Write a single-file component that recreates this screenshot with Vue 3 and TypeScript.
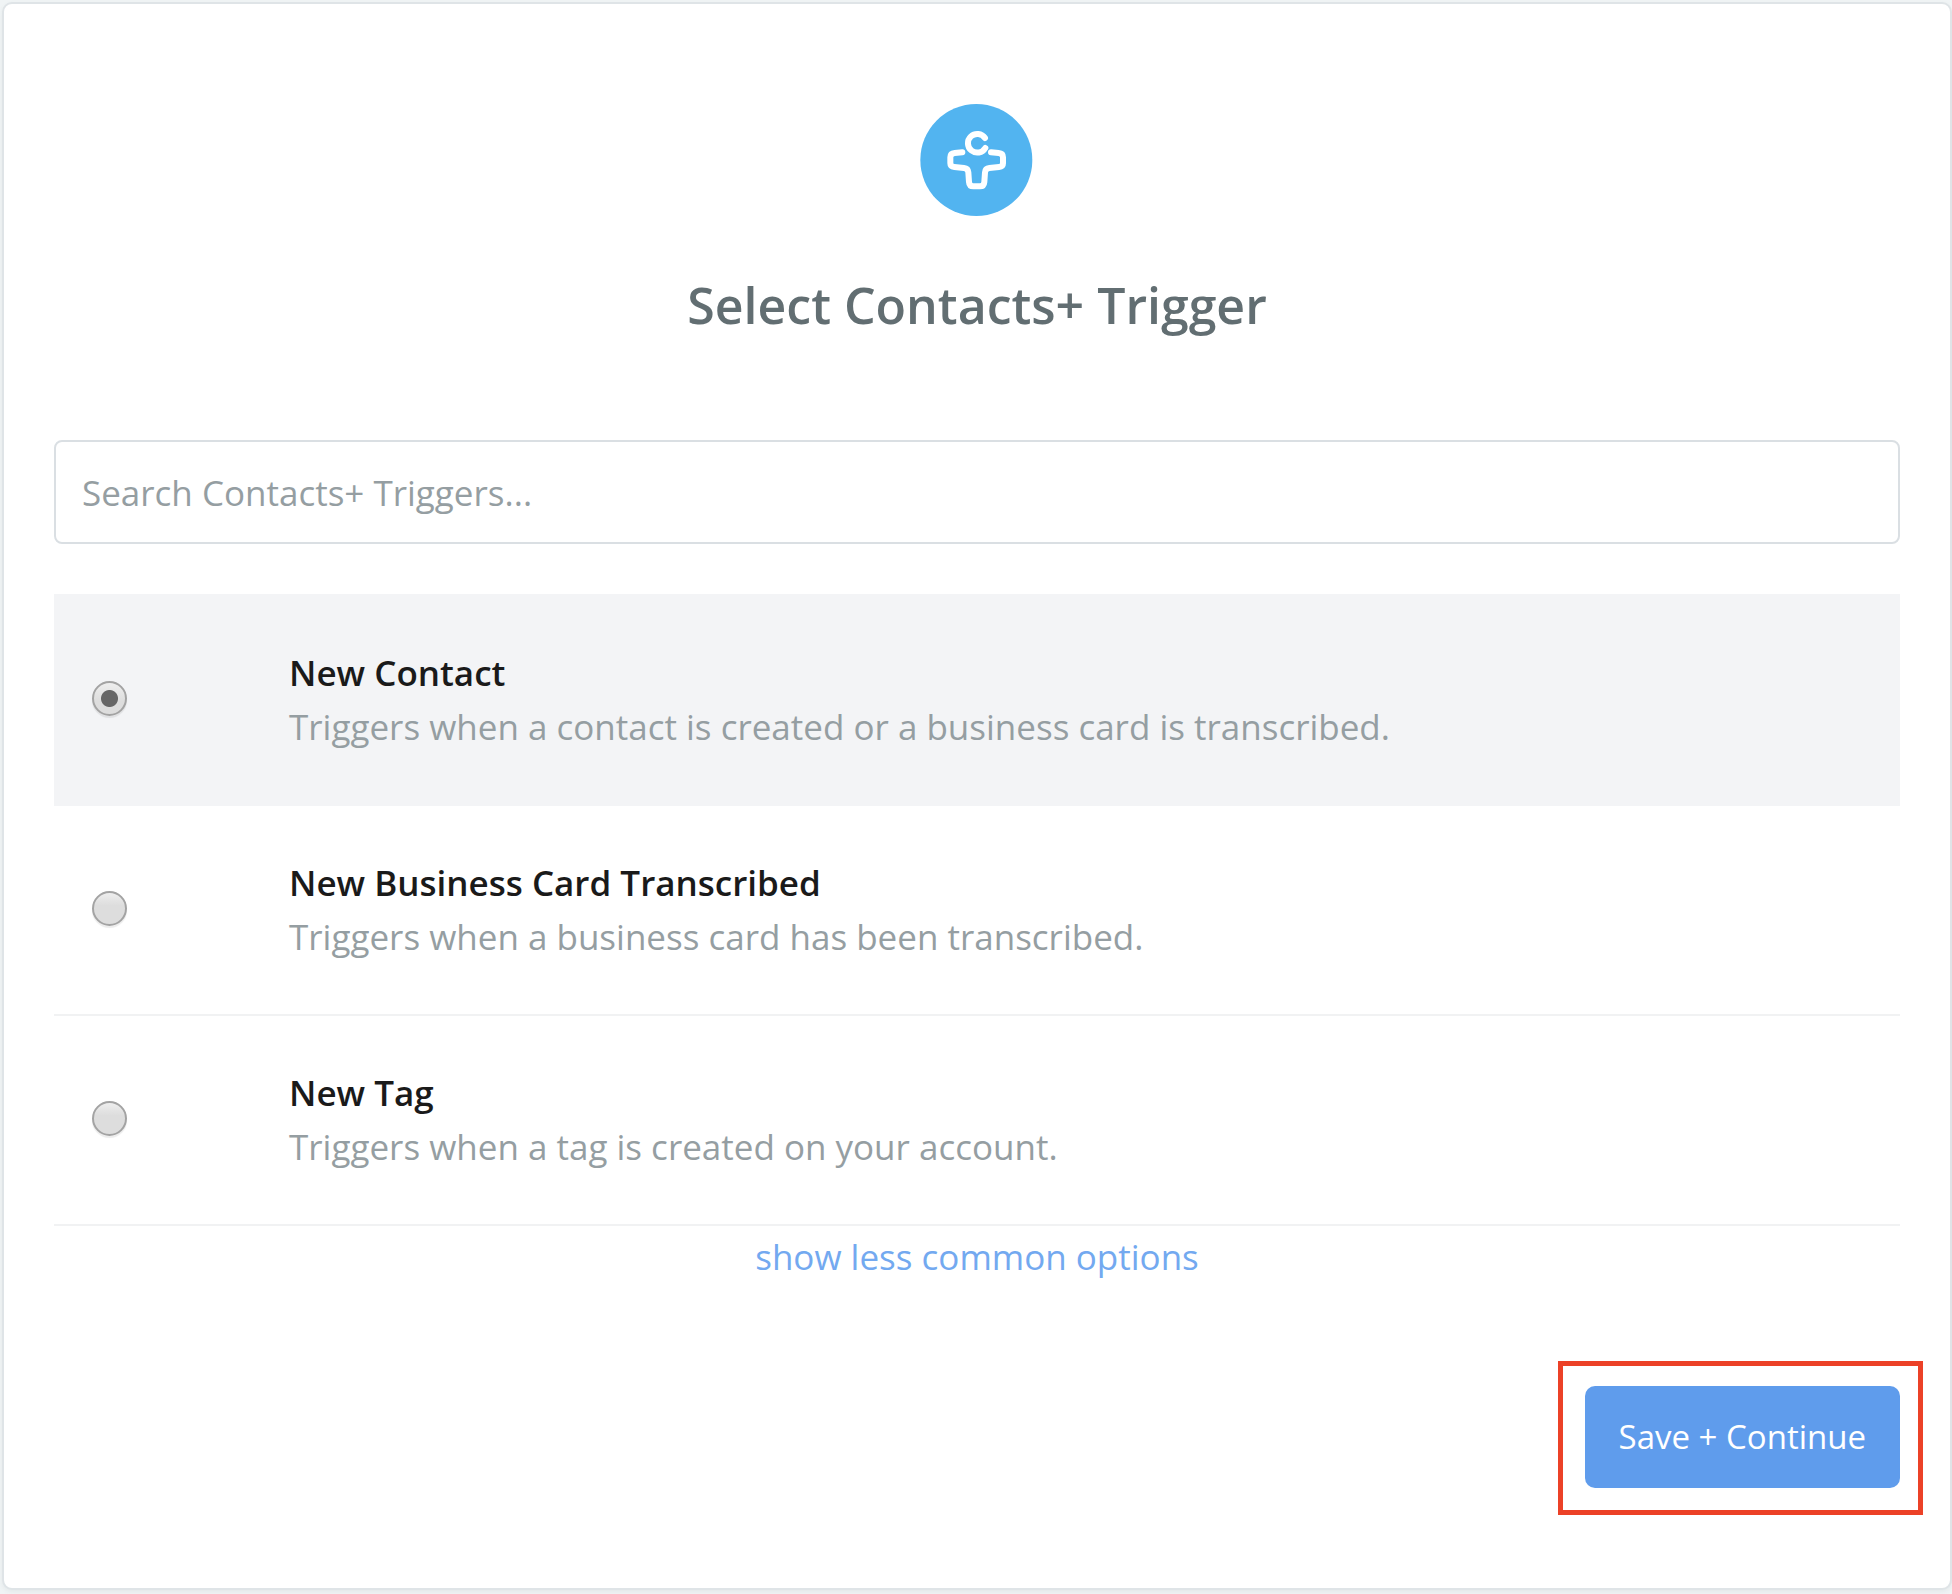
<script setup lang="ts">
import { computed, ref } from 'vue'

interface Trigger {
  id: string
  name: string
  description: string
}

const triggers: Trigger[] = [
  {
    id: 'new-contact',
    name: 'New Contact',
    description: 'Triggers when a contact is created or a business card is transcribed.',
  },
  {
    id: 'new-business-card',
    name: 'New Business Card Transcribed',
    description: 'Triggers when a business card has been transcribed.',
  },
  {
    id: 'new-tag',
    name: 'New Tag',
    description: 'Triggers when a tag is created on your account.',
  },
]

const selected = ref<string>('new-contact')
const query = ref<string>('')

const visibleTriggers = computed<Trigger[]>(() =>
  triggers.filter((t) => t.name.toLowerCase().includes(query.value.trim().toLowerCase())),
)
</script>

<template>
  <main class="page">
    <form class="card" @submit.prevent>
      <header class="header">
        <svg class="logo" viewBox="60 41 342 336" role="img" aria-label="Contacts+">
          <circle cx="229" cy="209" r="168" fill="#52b4f0" />
          <g fill="none" stroke="#fff" stroke-width="18" stroke-linecap="round" stroke-linejoin="round">
            <path d="M255 143A28 28 0 1 0 256 173" />
            <path
              d="M187 186L164 188Q151 189 151 201V219Q151 229 163 230L192 233Q204 234 205 246L207 275Q208 288 220 288H240Q252 288 253 275L255 246Q256 234 268 233L297 230Q309 229 309 219V201Q309 189 296 188L273 186"
            />
          </g>
        </svg>
        <h1 class="title">Select Contacts+ Trigger</h1>
      </header>

      <input
        v-model="query"
        class="search"
        type="text"
        placeholder="Search Contacts+ Triggers..."
        aria-label="Search Contacts+ Triggers"
      />

      <div class="options" role="radiogroup" aria-label="Trigger">
        <label
          v-for="trigger in visibleTriggers"
          :key="trigger.id"
          class="option"
          :class="{ selected: selected === trigger.id }"
        >
          <input v-model="selected" class="radio" type="radio" name="trigger" :value="trigger.id" />
          <span class="text">
            <span class="name">{{ trigger.name }}</span>
            <span class="description">{{ trigger.description }}</span>
          </span>
        </label>
      </div>

      <a class="toggle" href="#">show less common options</a>

      <footer class="actions">
        <div class="highlight">
          <button class="save" type="submit">Save + Continue</button>
        </div>
      </footer>
    </form>
  </main>
</template>

<style>
body {
  background: #f0f4f5;
}
</style>

<style scoped>
.page {
  padding: 2px 0 4px 2px;
  font-family: 'Open Sans', 'Noto Sans', sans-serif;
  font-size: 35px;
  line-height: 54px;
}

.page * {
  box-sizing: border-box;
}

.card {
  display: flex;
  flex-direction: column;
  padding: 100px 50px;
  border: 2px solid #dfe4e7;
  border-radius: 10px;
  background: #fff;
  box-shadow: 0 2px 4px rgba(96, 110, 115, 0.08);
}

.header {
  display: flex;
  flex-direction: column;
  align-items: center;
}

.logo {
  width: 114px;
  height: 112px;
}

.title {
  margin: 55px 0 101px;
  color: #626e72;
  font-size: 50px;
  font-weight: 600;
  line-height: 68px;
}

.search {
  width: 100%;
  height: 104px;
  padding: 0 26px;
  border: 2px solid #dadfe3;
  border-radius: 8px;
  background: #fff;
  color: #1a1a1a;
  font: inherit;
}

.search::placeholder {
  color: #959ea2;
  opacity: 1;
}

.options {
  margin-top: 50px;
}

.option {
  display: flex;
  align-items: center;
  min-height: 210px;
  padding: 0 38px;
  border-bottom: 2px solid #f1f2f3;
}

.option:first-child {
  border-top: 2px solid #f3f4f6;
  min-height: 212px;
}

.option.selected {
  border-color: #f3f4f6;
  background: #f3f4f6;
}

.radio {
  flex: none;
  width: 35px;
  height: 35px;
  margin: 0 162px 3px 0;
  border: 2px solid #a3a3a3;
  border-radius: 50%;
  appearance: none;
  background: linear-gradient(#eee, #ddd 40%, #ddd);
  box-shadow: 0 2px 1px rgba(0, 0, 0, 0.08);
}

.radio:checked {
  background:
    radial-gradient(circle, #666 8px, transparent 9px),
    linear-gradient(#eee, #ddd 60%, #ddd);
}

.text {
  display: flex;
  flex-direction: column;
}

.name {
  color: #1a1a1a;
  font-weight: 600;
}

.description {
  color: #959ea2;
}

.toggle {
  align-self: center;
  margin-top: 4px;
  color: #73a9f0;
  text-decoration: none;
}

.actions {
  display: flex;
  justify-content: flex-end;
  margin-top: 102px;
}

.highlight {
  position: relative;
}

.highlight::after {
  position: absolute;
  inset: -25px -23px -27px -27px;
  border: 5px solid #ec4127;
  content: '';
  pointer-events: none;
}

.save {
  display: block;
  height: 102px;
  padding: 0 34px;
  border: 0;
  border-radius: 10px;
  background: #5f9cec;
  color: #fff;
  font: inherit;
  font-size: 33px;
}
</style>
